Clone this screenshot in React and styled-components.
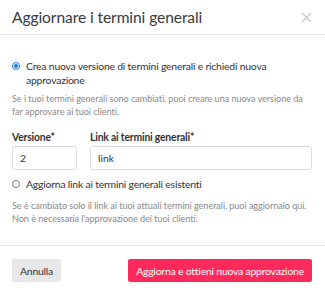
import React from "react";
import styled, { createGlobalStyle } from "styled-components";

const Global = createGlobalStyle`
  body {
    margin: 0;
    background: #ffffff;
    font-family: Lato, "Open Sans", sans-serif;
    color: #333333;
  }
`;

/* contenitore del dialogo */
const Dialog = styled.div`
  width: 325px;
  height: 294px;
  background: #ffffff;
  display: flex;
  flex-direction: column;
`;

const Header = styled.div`
  height: 35px;
  box-sizing: border-box;
  padding: 0 13px 0 12px;
  display: flex;
  align-items: center;
  justify-content: space-between;
  border-bottom: 1px solid #ececec;
`;

const Title = styled.h2`
  margin: 0;
  font-size: 15.6px;
  letter-spacing: -0.1px;
  font-weight: 400;
  color: #3a3a3a;
`;

const Close = styled.button`
  border: 0;
  background: none;
  padding: 0;
  width: 12px;
  height: 12px;
  display: flex;
  align-items: center;
  justify-content: center;
  cursor: pointer;
`;

const Body = styled.div`
  padding: 24px 13px 20px 12px;
  display: flex;
  flex-direction: column;
`;

const Option = styled.label`
  display: flex;
  align-items: flex-start;
  gap: 6px;
  font-size: 10.4px;
  letter-spacing: -0.2px;
  line-height: 14px;
  color: #333333;
  margin-top: ${(p) => p.$top || 0}px;
`;

const Dot = styled.span`
  flex: none;
  width: 8px;
  height: 8px;
  margin-top: 3px;
  border-radius: 50%;
  box-sizing: border-box;
  border: 1px solid ${(p) => (p.$on ? "#1a73e8" : "#777777")};
  display: flex;
  align-items: center;
  justify-content: center;
  &::after {
    content: "";
    width: 4px;
    height: 4px;
    border-radius: 50%;
    background: ${(p) => (p.$on ? "#1a73e8" : "transparent")};
  }
`;

const Help = styled.p`
  margin: ${(p) => p.$top}px 0 0;
  font-size: 9.1px;
  letter-spacing: -0.05px;
  line-height: 13px;
  color: #8a8a8a;
`;

const Fields = styled.div`
  display: grid;
  grid-template-columns: 65px 1fr;
  column-gap: 13px;
  margin-top: 12px;
`;

const Field = styled.div`
  display: flex;
  flex-direction: column;
`;

const Label = styled.span`
  font-size: 10.4px;
  letter-spacing: -0.2px;
  font-weight: 700;
  line-height: 14px;
  margin-bottom: 2px;
  color: #333333;
`;

const Input = styled.input`
  box-sizing: border-box;
  width: 100%;
  height: 24px;
  border: 1px solid #dddddd;
  border-radius: 3px;
  padding: 0 7px;
  font-family: Lato, "Open Sans", sans-serif;
  font-size: 10.4px;
  color: #333333;
  outline: none;
`;

const Footer = styled.div`
  border-top: 1px solid #ececec;
  padding: 13px 13px 0 12px;
  display: flex;
  justify-content: space-between;
`;

const Button = styled.button`
  height: 23px;
  border: 0;
  border-radius: 2px;
  padding: 0 8px;
  font-family: Lato, "Open Sans", sans-serif;
  font-size: 10.4px;
  letter-spacing: -0.2px;
  background: ${(p) => (p.$primary ? "#fe2a5b" : "#e8e8e8")};
  color: ${(p) => (p.$primary ? "#ffffff" : "#333333")};
  cursor: pointer;
`;

export default function App() {
  return (
    <>
      <Global />
      <Dialog>
        <Header>
          <Title>Aggiornare i termini generali</Title>
          <Close aria-label="Chiudi">
            <svg width="11" height="11" viewBox="0 0 11 11">
              <path d="M1 1L10 10M10 1L1 10" stroke="#c4c4c4" strokeWidth="1.1" />
            </svg>
          </Close>
        </Header>
        <Body>
          <Option>
            <Dot $on />
            <span>Crea nuova versione di termini generali e richiedi nuova approvazione</span>
          </Option>
          <Help $top={5}>
            Se i tuoi termini generali sono cambiati, puoi creare una nuova versione da far approvare ai tuoi clienti.
          </Help>
          <Fields>
            <Field>
              <Label>Versione*</Label>
              <Input defaultValue="2" />
            </Field>
            <Field>
              <Label>Link ai termini generali*</Label>
              <Input defaultValue="link" />
            </Field>
          </Fields>
          <Option $top={7}>
            <Dot />
            <span>Aggiorna link ai termini generali esistenti</span>
          </Option>
          <Help $top={8}>
            Se è cambiato solo il link ai tuoi attuali termini generali, puoi aggiornalo qui. Non è necessaria l'approvazione dei tuoi clienti.
          </Help>
        </Body>
        <Footer>
          <Button>Annulla</Button>
          <Button $primary>Aggiorna e ottieni nuova approvazione</Button>
        </Footer>
      </Dialog>
    </>
  );
}
